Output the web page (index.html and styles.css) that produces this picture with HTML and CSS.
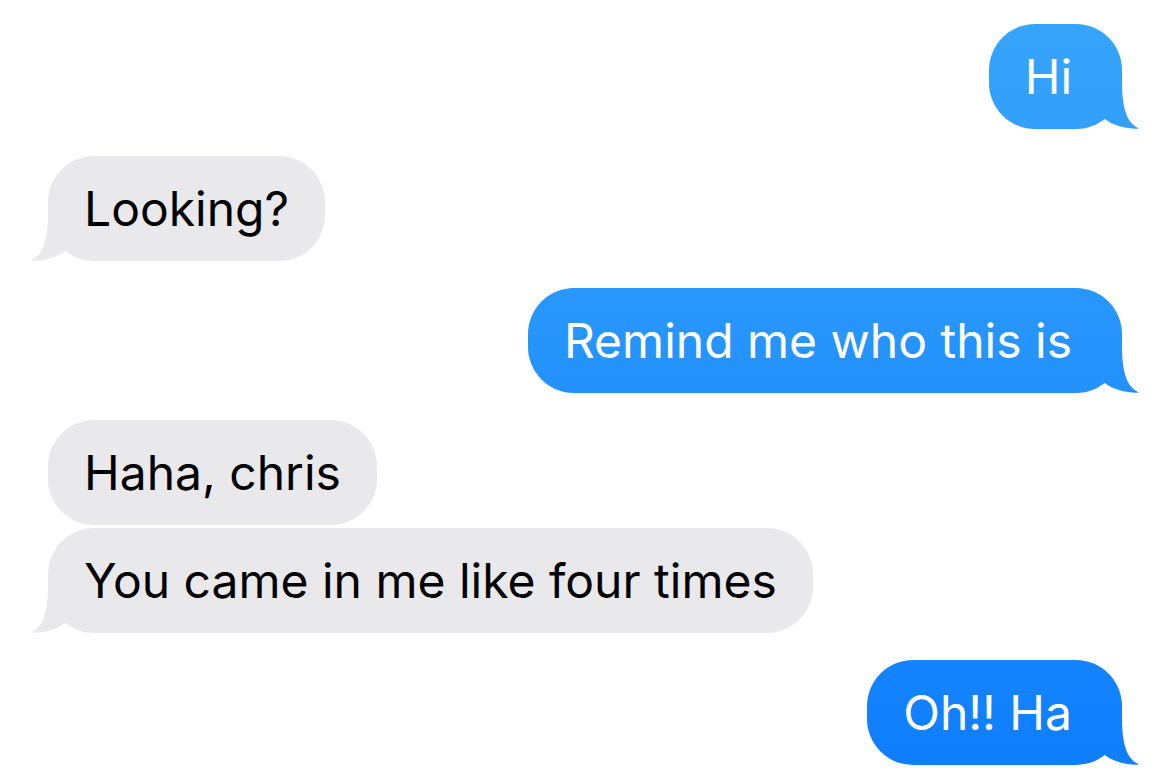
FILE: index.html
```html
<!DOCTYPE html>
<html lang="en">
<head>
<meta charset="utf-8">
<title>Messages</title>
<link rel="stylesheet" href="styles.css">
</head>
<body>
<main class="thread">
  <div class="row sent"><div class="bubble blue">Hi<span class="tail tail-right"></span></div></div>
  <div class="row recv"><div class="bubble gray">Looking?<span class="tail tail-left"></span></div></div>
  <div class="row sent"><div class="bubble blue">Remind me who this is<span class="tail tail-right"></span></div></div>
  <div class="group">
    <div class="row recv"><div class="bubble gray">Haha, chris</div></div>
    <div class="row recv"><div class="bubble gray">You came in me like four times<span class="tail tail-left"></span></div></div>
  </div>
  <div class="row sent"><div class="bubble blue">Oh!! Ha<span class="tail tail-right"></span></div></div>
</main>
</body>
</html>
```

FILE: styles.css
```css
html, body {
  margin: 0;
  padding: 0;
  background: #ffffff;
}

.thread {
  display: flex;
  flex-direction: column;
  gap: 27px;
  padding: 24px 48px 0 48px;
  font-family: "Inter", "Roboto", "Liberation Sans", sans-serif;
  font-size: 48px;
  font-weight: 400;
}

.group {
  display: flex;
  flex-direction: column;
  gap: 3px;
}

.row {
  display: flex;
}

.row.sent {
  justify-content: flex-end;
}

.row.recv {
  justify-content: flex-start;
}

.bubble {
  position: relative;
  box-sizing: border-box;
  height: 105px;
  display: flex;
  align-items: center;
  border-radius: 46px;
  white-space: nowrap;
  letter-spacing: 0;
}

.blue {
  color: #ffffff;
  background: linear-gradient(180deg, #38a6fb 0px, #0f7efe 772px) fixed;
  padding: 0 50px 0 36px;
}

.gray {
  color: #000000;
  background: #e9e9eb;
  padding: 0 36px 0 36px;
}

.tail {
  position: absolute;
  bottom: 0;
  width: 63px;
  height: 50px;
}

.tail-right {
  right: -18px;
  background: linear-gradient(180deg, #38a6fb 0px, #0f7efe 772px) fixed;
  clip-path: path("M 45 2 C 45 30 50 44 62 49.5 C 53 50.5 36 47 28 40 L 20 20 L 20 2 Z");
}

.tail-left {
  left: -18px;
  background: #e9e9eb;
  clip-path: path("M 18 2 C 18 30 13 44 1 49.5 C 10 50.5 27 47 35 40 L 43 20 L 43 2 Z");
}
```
